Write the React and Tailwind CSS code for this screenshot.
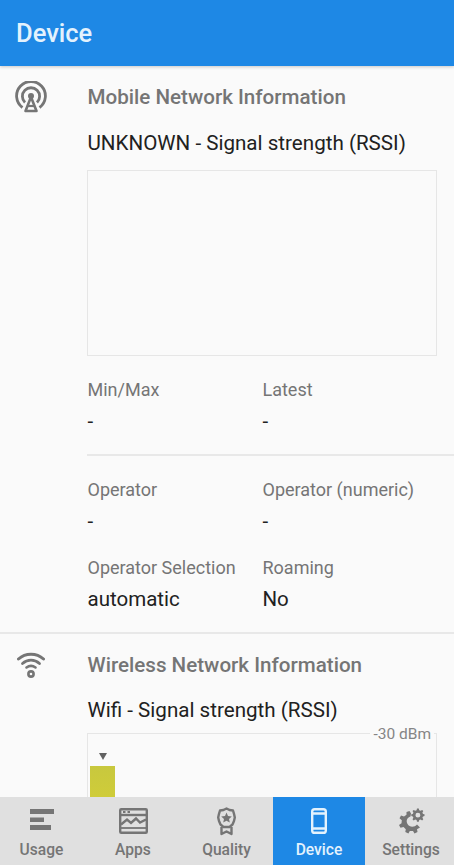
import React from 'react';

const TowerIcon = () => (
    <svg width="32" height="32" viewBox="0 0 32 32" fill="none" stroke="#757575">
        <path d="M7.5 26.5A14.4 14.4 0 1 1 24.5 26.5" strokeWidth="2.8" />
        <path d="M10 21.5A8.6 8.6 0 1 1 22 21.5" strokeWidth="2.8" />
        <circle cx="16" cy="15" r="3" fill="#757575" stroke="none" />
        <path d="M16 16 L10.5 30 H21.5 Z" strokeWidth="2.6" strokeLinejoin="round" />
        <path d="M13 25 H19" strokeWidth="2.2" />
    </svg>
);

const WifiIcon = () => (
    <svg width="28" height="27" viewBox="0 0 28 27" fill="none" stroke="#757575" strokeLinecap="round">
        <path d="M1.5 8C8.5 1.5 19.5 1.5 26.5 8" strokeWidth="3" />
        <path d="M5.5 12.5C10.5 8 17.5 8 22.5 12.5" strokeWidth="2.8" />
        <path d="M9.5 16.5C12.5 14.3 15.5 14.3 18.5 16.5" strokeWidth="2.6" />
        <circle cx="14" cy="23" r="2.6" strokeWidth="2.6" />
    </svg>
);

const UsageIcon = () => (
    <svg width="24" height="24" viewBox="0 0 24 24" fill="#757575">
        <rect x="0" y="0" width="24" height="5" />
        <rect x="0" y="8.5" width="14" height="4.5" />
        <rect x="0" y="16" width="21" height="5" />
    </svg>
);

const AppsIcon = () => (
    <svg width="29" height="26" viewBox="0 0 29 26" fill="none" stroke="#757575" strokeWidth="2.4">
        <rect x="1.2" y="1.2" width="26.6" height="23.6" rx="1" />
        <path d="M1.2 7H27.8" />
        <path d="M4 4H6.5M8.5 4H11" strokeWidth="2" />
        <path d="M2 16.5L8 11.5L12 15L17 10.5L21 14.5L27 11.5" />
        <path d="M1.2 20H27.8" strokeWidth="1.8" />
    </svg>
);

const QualityIcon = () => (
    <svg width="19" height="29" viewBox="0 0 19 29" fill="none" stroke="#757575" strokeWidth="2.4" strokeLinejoin="round">
        <path d="M9.5 1.5L12.5 3L16 3.5L17 6.8L17.8 10.5L17 14L15.5 17.5L12.5 20H6.5L3.5 17.5L2 14L1.2 10.5L2 6.8L3 3.5L6.5 3Z" />
        <path d="M9.5 5.5L11 9L14.8 9.4L12 12L12.8 15.6L9.5 13.8L6.2 15.6L7 12L4.2 9.4L8 9Z" fill="#757575" stroke="none" />
        <path d="M4.5 20V27L9.5 24.5L14.5 27V20" />
    </svg>
);

const DeviceIcon = () => (
    <svg width="16" height="26" viewBox="0 0 16 26" fill="none" stroke="#e3f2fd" strokeWidth="2.4">
        <rect x="1.2" y="1.2" width="13.6" height="23.6" rx="2.4" />
        <path d="M1.2 5.5H14.8M1.2 20.5H14.8" />
    </svg>
);

const SettingsIcon = () => (
    <svg width="27" height="26" viewBox="0 0 27 26" fill="#757575">
        <path d="M13 5.5L11.5 3L8.5 4L8.5 6.8L6 8.5L3 7.5L1.5 10.3L3.8 12.3L3.5 15.2L1 17L2.5 19.8L5.5 19L7.8 21.2L7.3 24L10.4 25.5L11.8 23H15L16.5 25.5L19.5 24L19 21.3L22 19.5L19 16.5C16.5 19.5 11.5 19.5 9.5 16C7.8 12.5 9 9.5 12.5 8.4Z" />
        <path fillRule="evenodd" d="M19 0.5L20.8 0.5L21.2 2.2L22.6 2.8L24.1 1.9L25.3 3L24.4 4.5L25 5.9L26.5 6.3V8L25 8.4L24.4 9.8L25.3 11.3L24.1 12.4L22.6 11.5L21.2 12.1L20.8 13.8H19L18.6 12.1L17.2 11.5L15.7 12.4L14.5 11.3L15.4 9.8L14.8 8.4L13.3 8V6.3L14.8 5.9L15.4 4.5L14.5 3L15.7 1.9L17.2 2.8L18.6 2.2ZM19.9 4.7A2.45 2.45 0 1 0 19.9 9.6A2.45 2.45 0 1 0 19.9 4.7Z" />
    </svg>
);

const Field = ({ label, value, className = '' }) => (
    <div className={className}>
        <div className="pl-[0.5px] text-[18px] leading-[24px] text-[#757575]">{label}</div>
        <div className="mt-[7px] pl-[0.5px] text-[20.5px] leading-[24px] text-[#212121]">{value}</div>
    </div>
);

const tabs = [
    { name: 'Usage', icon: <UsageIcon />, box: 'w-[83px]' },
    { name: 'Apps', icon: <AppsIcon />, box: 'w-[100px]' },
    { name: 'Quality', icon: <QualityIcon />, box: 'w-[90px] pr-[3px]' },
    { name: 'Device', icon: <DeviceIcon />, box: 'w-[92px] bg-[#1e88e5]', active: true },
    { name: 'Settings', icon: <SettingsIcon />, box: 'w-[89px] pl-[3px]' },
];

export default function App() {
    return (
        <div className="flex h-[865px] w-[454px] flex-col overflow-hidden bg-[#fafafa] font-['Roboto',sans-serif]">
            {/* App bar */}
            <div className="z-10 flex h-[66px] shrink-0 items-center bg-[#1e88e5] px-4 shadow-[0_1px_3px_rgba(0,0,0,0.2)]">
                <h1 className="text-[25.5px] font-medium text-[#e3f2fd]">Device</h1>
            </div>

            <div className="flex-1 overflow-hidden">
                {/* Mobile network */}
                <section className="flex border-b-2 border-[#e8e8e8]">
                    <div className="w-[87px] shrink-0 pl-[15px] pt-[15px]">
                        <TowerIcon />
                    </div>
                    <div className="flex-1 pt-[19px]">
                        <h2 className="pl-[0.5px] text-[20.6px] font-medium leading-6 text-[#757575]">Mobile Network Information</h2>
                        <p className="mt-[22px] pl-[0.5px] text-[20.6px] leading-6 text-[#212121]">UNKNOWN - Signal strength (RSSI)</p>
                        <div className="mt-[15px] h-[186px] w-[350px] border border-[#e6e6e6]" />
                        <div className="mt-[22px] flex">
                            <Field label="Min/Max" value="-" className="w-[175px]" />
                            <Field label="Latest" value="-" />
                        </div>
                        <div className="mt-[21px] border-t-2 border-[#e8e8e8]" />
                        <div className="mt-[22px] flex">
                            <Field label="Operator" value="-" className="w-[175px]" />
                            <Field label="Operator (numeric)" value="-" />
                        </div>
                        <div className="mb-[21px] mt-[23px] flex">
                            <Field label="Operator Selection" value="automatic" className="w-[175px]" />
                            <Field label="Roaming" value="No" />
                        </div>
                    </div>
                </section>

                {/* Wireless network */}
                <section className="flex">
                    <div className="w-[87px] shrink-0 pl-[17px] pt-[17px]">
                        <WifiIcon />
                    </div>
                    <div className="flex-1 pt-[19px]">
                        <h2 className="pl-[0.5px] text-[20.6px] font-medium leading-6 text-[#757575]">Wireless Network Information</h2>
                        <p className="mt-[21px] pl-[0.5px] text-[20.6px] leading-6 text-[#212121]">Wifi - Signal strength (RSSI)</p>
                        <div className="relative mt-[11px] h-[120px] w-[350px] border border-[#e6e6e6] pl-[2px] pt-[19px]">
                            <span className="absolute right-[2px] top-[-9px] bg-[#fafafa] px-[3px] text-[15.5px] leading-[18px] text-[#858585]">-30 dBm</span>
                            <div className="ml-[9px] h-0 w-0 border-x-[4px] border-t-[7px] border-x-transparent border-t-[#616161]" />
                            <div className="mt-[6px] h-[60px] w-[25px] bg-gradient-to-b from-[#c8c83e] to-[#d6d034]" />
                        </div>
                    </div>
                </section>
            </div>

            {/* Bottom tabs */}
            <nav className="z-10 flex h-[68px] shrink-0 bg-[#e0e0e0]">
                {tabs.map((tab) => (
                    <div key={tab.name} className={`flex ${tab.box} flex-col items-center`}>
                        <div className="flex h-[43px] items-center justify-center pt-[5px]">{tab.icon}</div>
                        <span className={`text-[15.6px] font-medium leading-5 ${tab.active ? 'text-[#e3f2fd]' : 'text-[#757575]'}`}>{tab.name}</span>
                    </div>
                ))}
            </nav>
        </div>
    );
}
